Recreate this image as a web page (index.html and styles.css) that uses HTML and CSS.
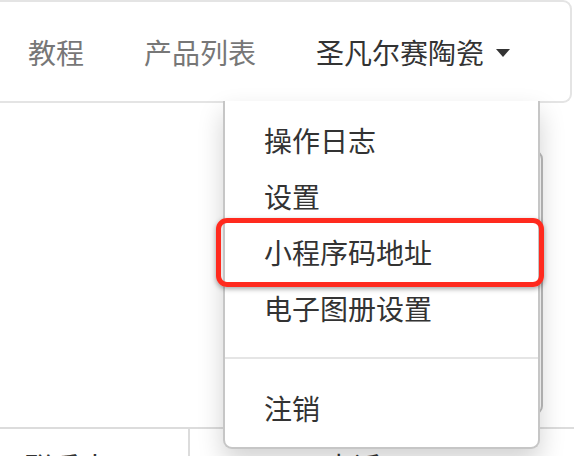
FILE: index.html
```html
<!DOCTYPE html>
<html lang="zh-CN">
<head>
<meta charset="utf-8">
<link rel="stylesheet" href="styles.css">
</head>
<body>
<nav class="navbar">
  <ul class="nav">
    <li class="nav-item"><a class="nav-link">教程</a></li>
    <li class="nav-item"><a class="nav-link">产品列表</a></li>
    <li class="nav-item dropdown">
      <a class="nav-link active">圣凡尔赛陶瓷<span class="caret"></span></a>
      <ul class="dropdown-menu">
        <li class="menu-item">操作日志</li>
        <li class="menu-item">设置</li>
        <li class="menu-item marked">小程序码地址<span class="highlight"></span></li>
        <li class="menu-item">电子图册设置</li>
        <li class="divider"></li>
        <li class="menu-item">注销</li>
      </ul>
    </li>
  </ul>
</nav>
<main class="content">
  <div class="top-area">
    <div class="panel"></div>
  </div>
  <div class="table-row">
    <div class="cell first">联系人</div>
    <div class="cell second">电话</div>
  </div>
</main>
</body>
</html>
```

FILE: styles.css
```css
* { box-sizing: border-box; }
html, body {
  margin: 0;
  padding: 0;
  background: #fff;
  height: 456px;
  overflow: hidden;
}
body {
  font-family: "Noto Sans CJK SC", "Noto Sans", sans-serif;
  color: #333;
}
.navbar {
  width: 572px;
  height: 103px;
  border: 2px solid #e4e4e4;
  border-left: none;
  border-radius: 0 9px 9px 0;
  background: #fff;
  display: flex;
  align-items: center;
  position: relative;
  z-index: 2;
}
.nav {
  list-style: none;
  margin: 0;
  padding: 0 0 0 28px;
  display: flex;
  gap: 60px;
  height: 100%;
  align-items: center;
}
.nav-item {
  height: 100%;
  display: flex;
  align-items: center;
}
.nav-link {
  font-size: 28px;
  line-height: 40px;
  color: #777;
  display: flex;
  align-items: center;
}
.nav-link.active {
  color: #333;
}
.caret {
  display: inline-block;
  width: 0;
  height: 0;
  margin-left: 12px;
  margin-top: 2px;
  border-top: 8px solid #333;
  border-left: 7px solid transparent;
  border-right: 7px solid transparent;
}
.dropdown {
  position: relative;
  padding-right: 30px;
}
.dropdown-menu {
  position: absolute;
  right: 0;
  top: 100%;
  width: 317px;
  margin: 0;
  padding: 11px 0 11px;
  list-style: none;
  background: #fff;
  border: 2px solid #c6c6c6;
  border-top: none;
  border-radius: 0 0 9px 9px;
  box-shadow: 0 12px 26px rgba(0, 0, 0, 0.18);
}
.menu-item {
  position: relative;
  height: 56px;
  line-height: 56px;
  padding: 0 39px;
  font-size: 28px;
  color: #333;
  white-space: nowrap;
}
.highlight {
  position: absolute;
  left: -9px;
  right: -6px;
  top: -6px;
  bottom: -7px;
  border: 5px solid #ff2a1e;
  border-radius: 11px;
  box-shadow: 0 2px 5px rgba(0, 0, 0, 0.35);
}
.divider {
  height: 2px;
  margin: 21px 0;
  background: #e5e5e5;
}
.content {
  display: flex;
  flex-direction: column;
}
.top-area {
  height: 324px;
  display: flex;
  justify-content: flex-end;
  padding: 47px 31px 12px 0;
}
.panel {
  width: 250px;
  border: 2px solid #bdbdbd;
  border-radius: 9px;
}
.table-row {
  display: flex;
  border-top: 2px solid #dcdcdc;
  height: 60px;
}
.cell {
  font-size: 28px;
  padding: 17px 0 0 25px;
  color: #333;
}
.cell.first {
  width: 190px;
  border-right: 2px solid #dcdcdc;
}
.cell.second {
  padding-left: 135px;
}
```
